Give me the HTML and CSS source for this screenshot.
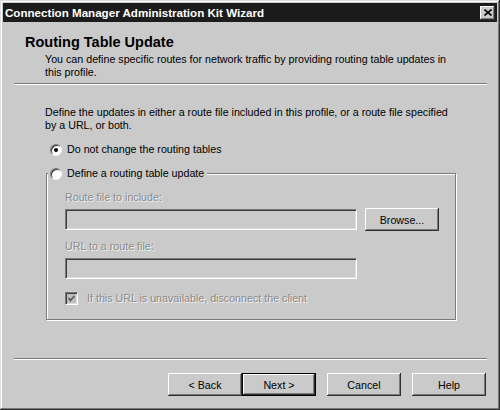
FILE: index.html
```html
<!DOCTYPE html>
<html lang="en">
<head>
<meta charset="utf-8">
<title>Connection Manager Administration Kit Wizard</title>
<link rel="stylesheet" href="styles.css">
</head>
<body>
<div class="window">
  <div class="titlebar">
    <span class="title">Connection Manager Administration Kit Wizard</span>
    <span class="close-btn">
      <svg width="8" height="7" viewBox="0 0 8 7"><path d="M0.5 0.5 L7.5 6.5 M7.5 0.5 L0.5 6.5" stroke="#000" stroke-width="1.6" fill="none"/></svg>
    </span>
  </div>
  <div class="client">
    <div class="header">
      <h1 class="header-title">Routing Table Update</h1>
      <p class="header-sub">You can define specific routes for network traffic by providing routing table updates in this profile.</p>
    </div>
    <div class="etched"></div>
    <div class="content">
      <p class="intro">Define the updates in either a route file included in this profile, or a route file specified by a URL, or both.</p>
      <div class="option">
        <span class="radio checked"></span>
        <span class="option-text">Do not change the routing tables</span>
      </div>
      <fieldset class="group">
        <legend class="group-legend">
          <span class="radio"></span>
          <span class="option-text">Define a routing table update</span>
        </legend>
        <div class="group-body">
          <div class="field-label">Route file to include:</div>
          <div class="field-row">
            <div class="textbox"></div>
            <div class="btn browse">Browse...</div>
          </div>
          <div class="field-label second">URL to a route file:</div>
          <div class="field-row short">
            <div class="textbox"></div>
          </div>
          <div class="check-row">
            <span class="checkbox">
              <svg width="9" height="9" viewBox="0 0 9 9"><polyline points="1.5,4 3.5,6.3 7.5,2" stroke="#5e5e5e" stroke-width="1.8" fill="none"/></svg>
            </span>
            <span class="disabled-text">If this URL is unavailable, disconnect the client</span>
          </div>
        </div>
      </fieldset>
    </div>
    <div class="etched"></div>
    <div class="buttons">
      <div class="btn">&lt; Back</div>
      <div class="btn default">Next &gt;</div>
      <div class="btn gap">Cancel</div>
      <div class="btn gap">Help</div>
    </div>
  </div>
</div>
</body>
</html>
```

FILE: styles.css
```css
html, body {
  margin: 0;
  padding: 0;
  background: #cacaca;
}

body {
  width: 500px;
  height: 410px;
  font-family: "Liberation Sans", Arial, sans-serif;
  font-size: 10.7px;
  color: #000;
}

.window {
  box-sizing: border-box;
  width: 500px;
  height: 410px;
  padding: 3px;
  background: #cacaca;
  display: flex;
  flex-direction: column;
  box-shadow:
    inset -1px -1px 0 #2e2e2e,
    inset 1px 1px 0 #dcdcdc,
    inset -2px -2px 0 #7a7a7a,
    inset 2px 2px 0 #ffffff;
}

.titlebar {
  height: 19px;
  flex: none;
  background: #1c1c1c;
  display: flex;
  align-items: center;
  justify-content: space-between;
  padding: 0 2px 0 2px;
}

.title {
  color: #fff;
  font-weight: bold;
  font-size: 11.6px;
  white-space: nowrap;
}

.close-btn {
  box-sizing: border-box;
  width: 15px;
  height: 14px;
  background: #cacaca;
  display: flex;
  align-items: center;
  justify-content: center;
  box-shadow:
    inset -1px -1px 0 #2e2e2e,
    inset 1px 1px 0 #ffffff,
    inset -2px -2px 0 #7a7a7a;
}

.client {
  flex: 1;
  display: flex;
  flex-direction: column;
}

.header {
  padding: 12px 0 0 22px;
}

.header-title {
  margin: 0;
  font-size: 14.5px;
  line-height: 17px;
  font-weight: bold;
}

.header-sub {
  margin: 2px 0 0 20px;
  width: 412px;
  line-height: 13px;
}

.etched {
  height: 1px;
  margin: 4px 10px 0 11px;
  background: #7a7a7a;
  border-bottom: 1px solid #fff;
  flex: none;
}

.content {
  flex: 1;
  padding: 0 0 0 42px;
}

.intro {
  margin: 21px 0 0 0;
  width: 410px;
  line-height: 13px;
}

.option {
  display: flex;
  align-items: center;
  height: 13px;
  margin-top: 11px;
  padding-left: 5px;
}

.option-text {
  margin-left: 5px;
  line-height: 13px;
  white-space: nowrap;
}

.radio {
  box-sizing: border-box;
  position: relative;
  width: 12px;
  height: 12px;
  flex: none;
  border-radius: 50%;
  background: #fff;
  border: 1px solid;
  border-color: #7a7a7a #f4f4f4 #f4f4f4 #7a7a7a;
  box-shadow: inset 1px 1px 0 #2e2e2e;
}

.radio.checked::after {
  content: "";
  position: absolute;
  left: 3px;
  top: 3px;
  width: 4px;
  height: 4px;
  border-radius: 50%;
  background: #000;
}

.group {
  box-sizing: border-box;
  width: 410px;
  margin: 11px 0 0 1px;
  padding: 0;
  border: 1px solid #7a7a7a;
  box-shadow: inset 1px 1px 0 #fff, 1px 1px 0 #fff;
  min-inline-size: 0;
}

.group-legend {
  display: flex;
  align-items: center;
  height: 13px;
  padding: 0 3px 0 2px;
  margin-left: 1px;
  background: #cacaca;
}

.group-body {
  padding: 11px 0 14px 18px;
}

.disabled-text,
.field-label {
  color: #8a8a8a;
  text-shadow: 1px 1px 0 #f2f2f2;
  line-height: 13px;
  white-space: nowrap;
}

.field-label.second {
  margin-top: 9px;
}

.field-row {
  display: flex;
  align-items: center;
  height: 23px;
  margin-top: 4px;
}

.field-row.short {
  margin-top: 4px;
}

.textbox {
  box-sizing: border-box;
  width: 292px;
  height: 21px;
  background: #cacaca;
  border: 1px solid;
  border-color: #7a7a7a #fff #fff #7a7a7a;
  box-shadow: inset 1px 1px 0 #3a3a3a, inset -1px -1px 0 #dcdcdc;
}

.btn {
  box-sizing: border-box;
  width: 74px;
  height: 23px;
  display: flex;
  align-items: center;
  justify-content: center;
  background: #cacaca;
  white-space: nowrap;
  box-shadow:
    inset -1px -1px 0 #2e2e2e,
    inset 1px 1px 0 #ffffff,
    inset -2px -2px 0 #7a7a7a;
}

.btn.browse {
  width: 74px;
  margin-left: 8px;
}

.btn.default {
  border: 1px solid #000;
}

.btn.gap {
  margin-left: 11px;
}

.check-row {
  display: flex;
  align-items: center;
  height: 13px;
  margin-top: 12px;
}

.checkbox {
  box-sizing: border-box;
  width: 13px;
  height: 13px;
  flex: none;
  display: flex;
  align-items: center;
  justify-content: center;
  background: #bdbdbd;
  border: 1px solid;
  border-color: #7a7a7a #fff #fff #7a7a7a;
  box-shadow: inset 1px 1px 0 #3a3a3a, inset -1px -1px 0 #dcdcdc;
}

.check-row .disabled-text {
  margin-left: 9px;
}

.client > .etched + .buttons {
  margin-top: 13px;
}

.buttons {
  display: flex;
  justify-content: flex-end;
  padding-right: 11px;
  margin-bottom: 11px;
}
```
